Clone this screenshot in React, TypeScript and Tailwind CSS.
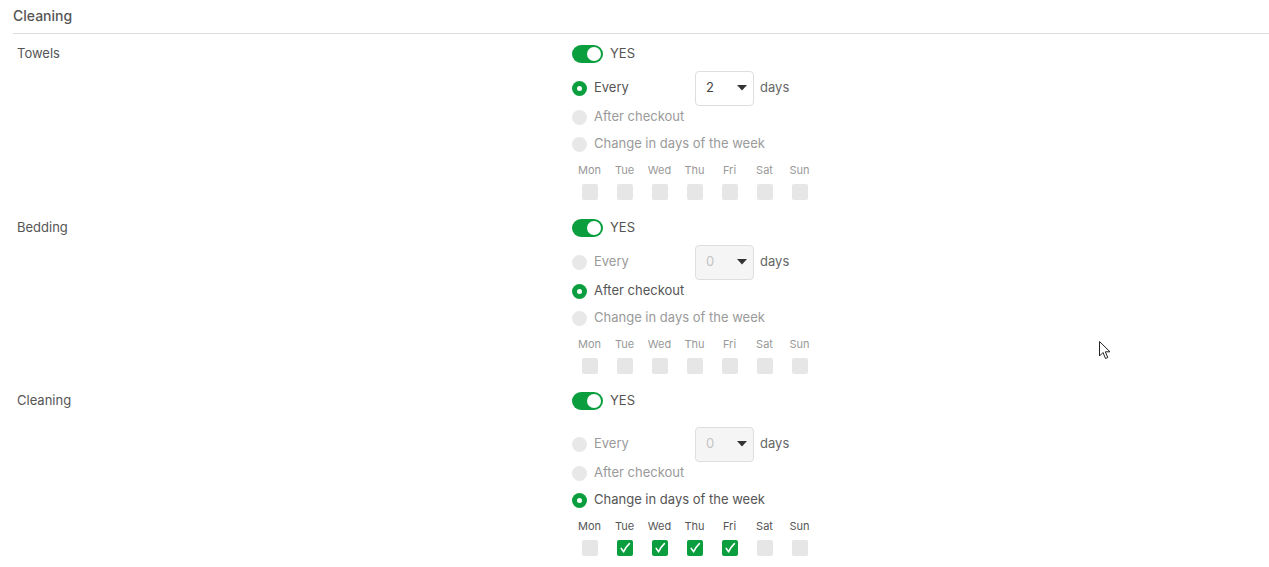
import React from "react";

const GREEN = "bg-[#0a9e3f]";

function Toggle() {
  return (
    <div className="flex items-center gap-[7px]">
      <div className={`w-[31px] h-[18px] rounded-full ${GREEN} relative`}>
        <div className="absolute right-[2px] top-[2px] w-[14px] h-[14px] rounded-full bg-white" />
      </div>
      <span className="text-[13px] text-[#555]">YES</span>
    </div>
  );
}

function Radio({ checked }: { checked: boolean }) {
  return checked ? (
    <div className={`w-[15px] h-[15px] rounded-full ${GREEN} flex items-center justify-center`}>
      <div className="w-[5px] h-[5px] rounded-full bg-white" />
    </div>
  ) : (
    <div className="w-[15px] h-[15px] rounded-full bg-[#e8e8e8]" />
  );
}

function Select({ value, disabled }: { value: string; disabled: boolean }) {
  return (
    <div
      className={`w-[59px] h-[35px] rounded-[4px] border border-[#dedede] flex items-center justify-between pl-[10px] pr-[5px] ${
        disabled ? "bg-[#f5f5f5] text-[#c4c4c4]" : "bg-white text-[#444]"
      } text-[13px]`}
    >
      <span>{value}</span>
      <svg width="10" height="6" viewBox="0 0 10 6" className="mr-[1px]">
        <path d="M0 0 L10 0 L5 5.5 Z" fill="#333" />
      </svg>
    </div>
  );
}

function Check({ checked }: { checked: boolean }) {
  return checked ? (
    <div className={`w-[16px] h-[16px] rounded-[2px] ${GREEN} flex items-center justify-center`}>
      <svg width="12" height="12" viewBox="0 0 12 12">
        <path d="M2.2 6.4 L4.6 9.8 C6 6.6 7.8 4 10.4 1.6" stroke="white" strokeWidth="1.6" fill="none" strokeLinecap="round" strokeLinejoin="round" />
      </svg>
    </div>
  ) : (
    <div className="w-[16px] h-[16px] rounded-[2px] bg-[#e6e6e6]" />
  );
}

const DAYS = ["Mon", "Tue", "Wed", "Thu", "Fri", "Sat", "Sun"];

function Section({
  label,
  mode,
  value,
  checkedDays,
  extraGap,
}: {
  label: string;
  mode: 0 | 1 | 2;
  value: string;
  checkedDays: boolean[];
  extraGap?: boolean;
}) {
  const txt = (on: boolean) => (on ? "text-[#555]" : "text-[#9a9a9a]");
  return (
    <div className="flex">
      <div className="w-[555px] h-[34px] flex items-center text-[13px] text-[#555]">{label}</div>
      <div className="flex flex-col">
        <div className="h-[34px] flex items-center">
          <Toggle />
        </div>
        {extraGap && <div className="h-[9px]" />}
        <div className="h-[34px] flex items-center">
          <Radio checked={mode === 0} />
          <span className={`ml-[7px] w-[101px] text-[13px] ${txt(mode === 0)}`}>Every</span>
          <Select value={value} disabled={mode !== 0} />
          <span className="ml-[6px] text-[13px] text-[#666]">days</span>
        </div>
        <div className="h-[24px] flex items-center">
          <Radio checked={mode === 1} />
          <span className={`ml-[7px] text-[13px] ${txt(mode === 1)}`}>After checkout</span>
        </div>
        <div className="h-[30px] flex items-center">
          <Radio checked={mode === 2} />
          <span className={`ml-[7px] text-[13px] ${txt(mode === 2)}`}>Change in days of the week</span>
        </div>
        <div className="h-[22px] flex items-center">
          {DAYS.map((d) => (
            <div key={d} className={`w-[35px] text-center text-[11px] ${mode === 2 ? "text-[#555]" : "text-[#999]"}`}>
              {d}
            </div>
          ))}
        </div>
        <div className="h-[22px] flex items-center">
          {DAYS.map((d, i) => (
            <div key={d} className="w-[35px] flex justify-center">
              <Check checked={checkedDays[i]} />
            </div>
          ))}
        </div>
      </div>
    </div>
  );
}

export default function App() {
  const none = [false, false, false, false, false, false, false];
  return (
    <div className="w-[1269px] h-[567px] bg-white relative overflow-hidden" style={{ fontFamily: "Inter, 'Open Sans', sans-serif" }}>
      <div className="ml-[13px] h-[34px] border-b border-[#dcdcdc] flex items-center">
        <span className="text-[14px] font-medium text-[#555] -mt-[3px]">Cleaning</span>
      </div>
      <div className="pl-[17px] pt-[3px] flex flex-col gap-[8px]">
        <Section label="Towels" mode={0} value="2" checkedDays={none} />
        <Section label="Bedding" mode={1} value="0" checkedDays={none} />
        <div className="-mt-[1px]">
          <Section label="Cleaning" mode={2} value="0" checkedDays={[false, true, true, true, true, false, false]} extraGap />
        </div>
      </div>
      <svg className="absolute left-[1099px] top-[341px]" width="13" height="20" viewBox="0 0 13 20">
        <path d="M0.5 0.5 L0.5 15 L4 11.5 L6.5 17.5 L8.8 16.5 L6.3 10.8 L11 10.8 Z" fill="white" stroke="#222" strokeWidth="1" />
      </svg>
    </div>
  );
}
